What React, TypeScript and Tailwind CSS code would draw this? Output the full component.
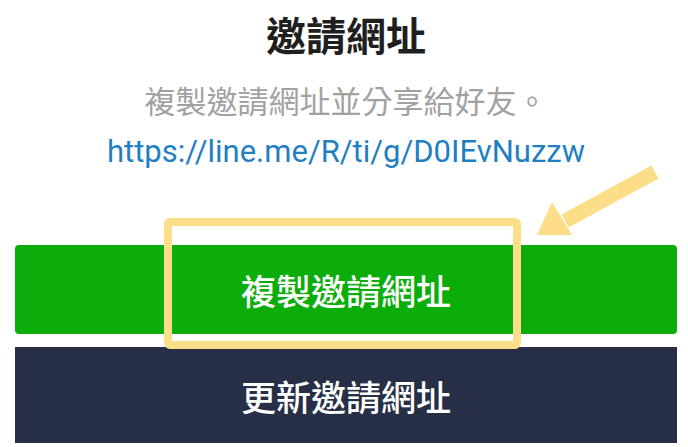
export default function App() {
  const cjk = { fontFamily: '"Noto Sans CJK TC", "Noto Sans", sans-serif' };

  return (
    <div className="relative h-[447px] w-full overflow-hidden bg-white pl-[15px] pr-[11px]" style={cjk}>
      {/* Header copy */}
      <div className="flex flex-col items-center">
        <h1 className="mt-[14px] text-[40px] font-bold leading-none text-[#1f1f1f]">邀請網址</h1>
        <p className="mt-[30px] text-[31px] leading-none text-[#a2a2a2]">複製邀請網址並分享給好友。</p>
        <a
          className="mt-[21px] text-[31px] leading-none text-[#1f7fc3]"
          style={{ fontFamily: 'Roboto, "Liberation Sans", sans-serif' }}
        >
          https://line.me/R/ti/g/D0IEvNuzzw
        </a>
      </div>

      {/* Actions */}
      <div className="mt-[78px] flex flex-col gap-[13px]">
        <button className="flex h-[89px] items-center justify-center rounded-[4px] bg-[#0aad0a] text-[35px] font-medium leading-none text-white">
          複製邀請網址
        </button>
        <button className="flex h-[96px] items-center justify-center bg-[#262f46] text-[35px] font-medium leading-none text-white">
          更新邀請網址
        </button>
      </div>

      {/* Highlight annotation */}
      <div className="absolute left-[164px] top-[218px] h-[131px] w-[357px] rounded-[6px] border-[8px] border-[#fdde88]" />
      <svg className="absolute left-[530px] top-[155px]" width="140" height="90" viewBox="0 0 140 90">
        <line x1="125" y1="17" x2="35" y2="66" stroke="#fdde88" strokeWidth="15" />
        <polygon points="22,47 7,80 42,80" fill="#fdde88" />
      </svg>
    </div>
  );
}
